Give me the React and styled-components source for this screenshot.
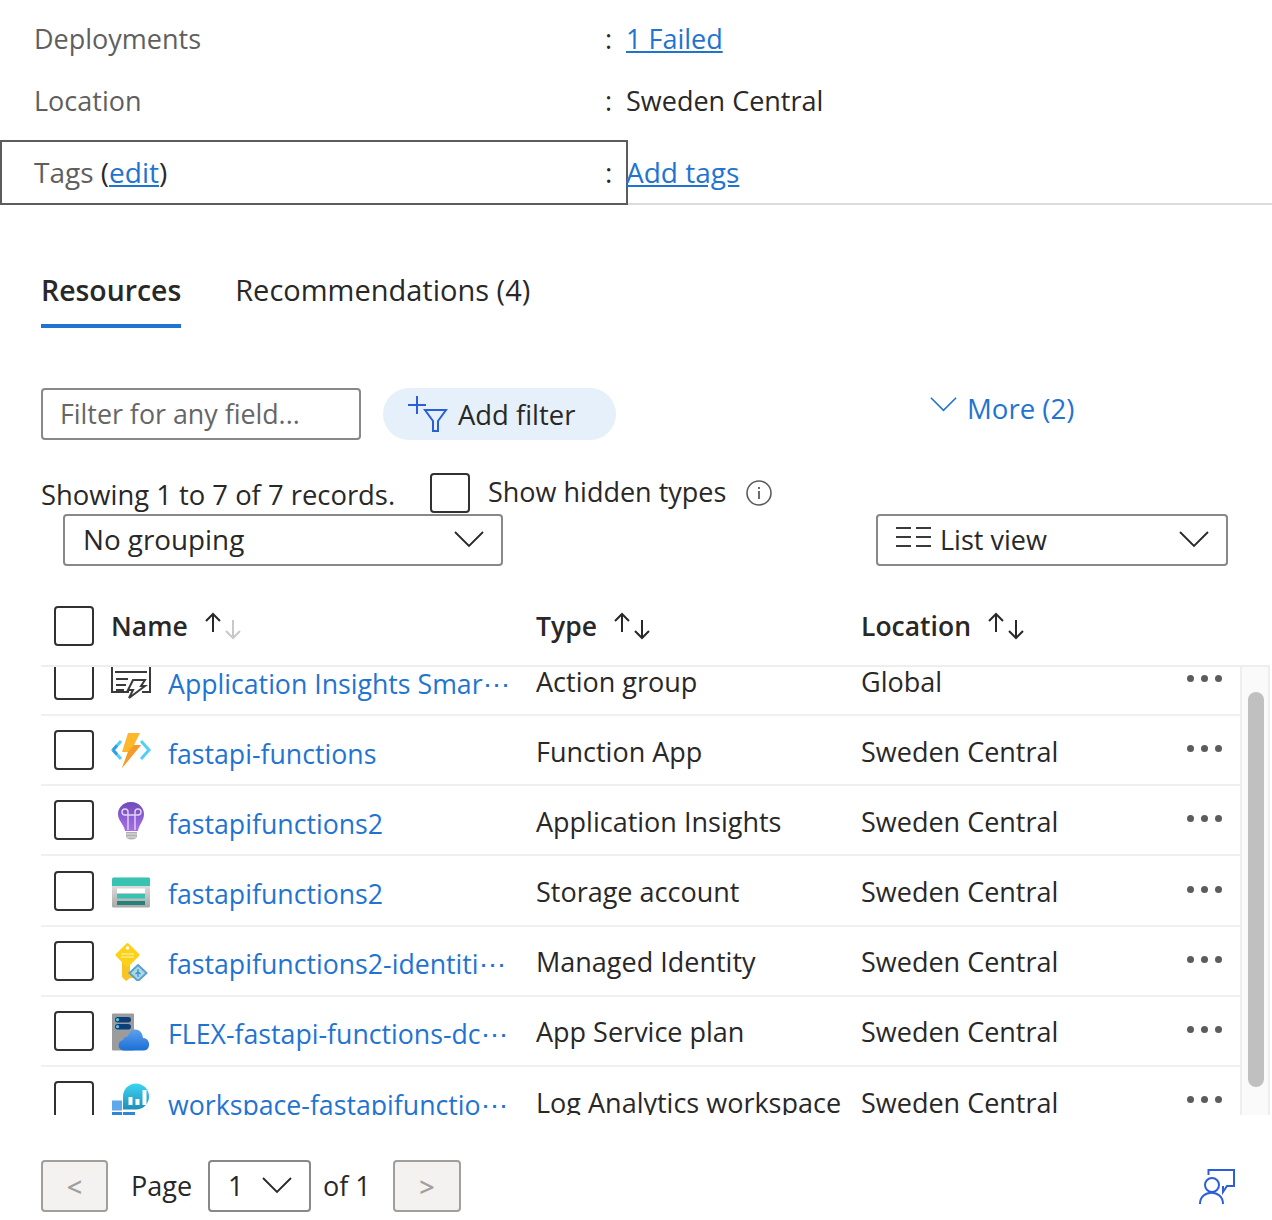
import React from "react";
import styled, { createGlobalStyle } from "styled-components";

const GlobalStyle = createGlobalStyle`
  html, body {
    margin: 0;
    padding: 0;
    background: #ffffff;
  }
  body {
    font-family: "Open Sans", "Liberation Sans", sans-serif;
    color: #292827;
  }
  * {
    box-sizing: border-box;
  }
`;

const BLUE = "#1f74d2";

const Page = styled.div`
  width: 1272px;
  height: 1220px;
  overflow: hidden;
  font-size: 27px;
`;

const Summary = styled.div`
  padding-top: 7px;
  border-bottom: 2px solid #dcdcdc;
`;

const SummaryRow = styled.div`
  display: flex;
  align-items: center;
  height: 62px;
  padding-left: 34px;
`;

const Label = styled.div`
  width: 571px;
  color: #5f5f5f;
`;

const Colon = styled.div`
  width: 21px;
`;

const Link = styled.a`
  color: ${BLUE};
  text-decoration: underline;
`;

const Paren = styled.span`
  color: #292827;
`;

const TagsRow = styled.div`
  display: flex;
  align-items: center;
  margin-top: 9px;
  height: 65px;
  margin-bottom: -2px;
  padding-bottom: 0;
  font-size: 28px;
  line-height: 36px;
`;

const TagsCell = styled.div`
  display: flex;
  align-items: center;
  width: 628px;
  height: 65px;
  padding: 0 0 2px 32px;
  border: 2px solid #5c5c5c;
  margin-right: -2px;
`;

const TagsValue = styled.div`
  padding-bottom: 2px;
`;

const Tabs = styled.div`
  display: flex;
  gap: 54px;
  margin-top: 68px;
  padding-left: 41px;
`;

const Tab = styled.div`
  height: 55px;
  border-bottom: ${(p) => (p.$active ? `4px solid ${BLUE}` : "none")};
  font-size: ${(p) => (p.$active ? 28.4 : 29)}px;
  font-weight: ${(p) => (p.$active ? 600 : 400)};
  line-height: 34px;
`;

const FilterRow = styled.div`
  display: flex;
  margin-top: 60px;
  padding-left: 41px;
  height: 52px;
`;

const FilterInput = styled.input`
  width: 320px;
  height: 52px;
  padding: 0 17px 2px;
  border: 2px solid #8a8886;
  border-radius: 4px;
  font: inherit;
  font-size: 26.8px;
  color: #292827;
  &::placeholder {
    color: #666666;
    opacity: 1;
  }
`;

const AddFilter = styled.div`
  display: flex;
  align-items: center;
  gap: 10px;
  width: 233px;
  height: 52px;
  margin-left: 22px;
  padding-left: 24px;
  border-radius: 26px;
  background: #e6f0fa;
  font-size: 27.4px;
`;

const More = styled.div`
  display: flex;
  align-items: center;
  gap: 10px;
  height: 40px;
  margin-left: 314px;
  color: ${BLUE};
  font-size: 27.6px;
`;

const MoreChevron = styled.div`
  display: flex;
  margin-bottom: 7px;
`;

const RecordsRow = styled.div`
  display: flex;
  height: 41px;
  margin-top: 33px;
  padding-left: 41px;
`;

const Records = styled.div`
  width: 389px;
  padding-top: 4px;
  line-height: 36px;
  font-size: 27.4px;
`;

const Checkbox = styled.div`
  flex: none;
  width: 40px;
  height: 40px;
  border: 2px solid #323130;
  border-radius: 4px;
  background: #ffffff;
`;

const ShowHidden = styled.div`
  margin-left: 18px;
  line-height: 38px;
`;

const InfoIcon = styled.svg`
  margin: 7px 0 0 20px;
`;

const GroupRow = styled.div`
  display: flex;
  justify-content: space-between;
  padding: 0 44px 0 63px;
`;

const Select = styled.div`
  display: flex;
  align-items: center;
  justify-content: space-between;
  width: ${(p) => p.$width}px;
  height: 52px;
  padding: 0 ${(p) => p.$right}px 2px ${(p) => p.$left}px;
  border: 2px solid #8a8886;
  border-radius: 4px;
  font-size: ${(p) => p.$size || 27}px;
`;

const SelectLabel = styled.div`
  display: flex;
  align-items: center;
  gap: 8px;
`;

const ListIcon = styled.svg`
  margin-bottom: 4px;
`;

const TableHead = styled.div`
  display: grid;
  grid-template-columns: 57px 425px 325px 1fr;
  height: 61px;
  margin: 40px 2px 0 41px;
  padding-left: 13px;
  border-bottom: 2px solid #eeeeee;
`;

const HeadCell = styled.div`
  display: flex;
  gap: 17px;
  height: 40px;
  align-items: center;
  font-size: 26.5px;
  font-weight: 600;
`;

const TableBody = styled.div`
  display: flex;
  height: 448px;
  margin: 0 2px 0 41px;
  overflow: hidden;
`;

const Rows = styled.div`
  width: 1199px;
  height: 448px;
  overflow: hidden;
`;

const RowsInner = styled.div`
  margin-top: -21px;
`;

const Row = styled.div`
  display: grid;
  grid-template-columns: 57px 57px 368px 325px 326px 1fr;
  align-items: center;
  height: 70.17px;
  padding-left: 13px;
  border-bottom: 2px solid #f0f0f0;
`;

const IconCell = styled.div`
  display: flex;
`;

const NameLink = styled.div`
  color: ${BLUE};
  white-space: nowrap;
  padding-top: 6px;
  font-size: 26.7px;
`;

const CellText = styled.div`
  white-space: nowrap;
  padding-top: 2px;
`;

const Dots = styled.div`
  display: flex;
  gap: 7px;
  margin-bottom: 3px;
`;

const Dot = styled.span`
  width: 7px;
  height: 7px;
  border-radius: 50%;
  background: #5c5c5c;
`;

const Track = styled.div`
  width: 30px;
  height: 448px;
  padding: 25px 0 0 6px;
  border-left: 2px solid #eeeeee;
  border-right: 2px solid #eeeeee;
  background: #fafafa;
`;

const Thumb = styled.div`
  width: 16px;
  height: 395px;
  border-radius: 8px;
  background: #c0c0c0;
`;

const Pager = styled.div`
  display: flex;
  align-items: center;
  height: 52px;
  margin-top: 45px;
  padding: 0 37px 0 41px;
`;

const PageButton = styled.div`
  display: flex;
  align-items: center;
  justify-content: center;
  width: ${(p) => p.$width}px;
  height: 52px;
  border: 2px solid #a19f9d;
  border-radius: 4px;
  background: #f3f2f1;
  color: #a19f9d;
  font-weight: 600;
`;

const PagerText = styled.div`
  width: ${(p) => p.$width}px;
  margin-left: ${(p) => p.$left}px;
  padding-bottom: 2px;
`;

const Feedback = styled.svg`
  margin-left: auto;
`;

const Chevron = ({ size = 30, color = "#292827" }) => (
  <svg width={size} height={size * 0.6} viewBox="0 0 30 18" fill="none">
    <path d="M1 2 L15 16 L29 2" stroke={color} strokeWidth="1.8" />
  </svg>
);

const SortArrows = ({ down = "#292827" }) => (
  <svg width="36" height="28" viewBox="0 0 36 28" fill="none">
    <path d="M8 20 V2 M1 9 L8 2 L15 9" stroke="#292827" strokeWidth="2" />
    <path d="M28 8 V26 M21 19 L28 26 L35 19" stroke={down} strokeWidth="2" />
  </svg>
);

const ActionGroupIcon = () => (
  <svg width="40" height="40" viewBox="0 0 40 40" fill="none">
    <path d="M18 32 H1 V3 H39 V32 H31" stroke="#3a3a3a" strokeWidth="2" />
    <path d="M4 12 H36 M5 19 H17 M5 25 H15 M5 30 H13" stroke="#3a3a3a" strokeWidth="2" />
    <path d="M22 20 H34 L30 26 H34 L18 38 L22 30 H17 Z" fill="#ffffff" stroke="#3a3a3a" strokeWidth="2" />
  </svg>
);

const FunctionIcon = () => (
  <svg width="40" height="40" viewBox="0 0 40 40" fill="none">
    <path d="M10 11 L2 20 L10 29" stroke="#4fd0f8" strokeWidth="3" />
    <path d="M30 11 L38 20 L30 29" stroke="#4fd0f8" strokeWidth="3" />
    <path d="M2 20 L6 15.5 M2 20 L6 24.5" stroke="#3a9ce0" strokeWidth="3" />
    <path d="M17 3 H29 L23 15 H30 L11 38 L17 22 H11 Z" fill="#fcb72b" />
    <path d="M23 15 H30 L11 38 L17 22 Z" fill="#f79a2a" />
  </svg>
);

const BulbIcon = () => (
  <svg width="40" height="40" viewBox="0 0 40 40" fill="none">
    <defs>
      <linearGradient id="bulb" x1="0" y1="0" x2="0" y2="1">
        <stop offset="0" stopColor="#6f4bb8" />
        <stop offset="1" stopColor="#a670e8" />
      </linearGradient>
    </defs>
    <path d="M20 2 C11 2 7 9 7 14 C7 21 13 24 14 31 H27 C28 24 33 21 33 14 C33 9 29 2 20 2 Z" fill="url(#bulb)" />
    <path d="M17 30 V12 M24 30 V12 M17 12 a3 3 0 1 0 -3 3 H27 a3 3 0 1 0 -3 -3" stroke="#e4d4f8" strokeWidth="1.4" />
    <path d="M15 32 H26 V36 C26 38 24 39.5 20.5 39.5 C17 39.5 15 38 15 36 Z" fill="#b0b0b0" />
    <path d="M15 34 H26 M16 37 H25" stroke="#e4e4e4" strokeWidth="1" />
  </svg>
);

const StorageIcon = () => (
  <svg width="40" height="40" viewBox="0 0 40 40" fill="none">
    <defs>
      <linearGradient id="store" x1="0" y1="0" x2="0" y2="1">
        <stop offset="0" stopColor="#f0f0f0" />
        <stop offset="1" stopColor="#a8a8a8" />
      </linearGradient>
    </defs>
    <rect x="1" y="6.5" width="38" height="30" rx="1.5" fill="url(#store)" />
    <path d="M1 8 a1.5 1.5 0 0 1 1.5 -1.5 H37.5 a1.5 1.5 0 0 1 1.5 1.5 V15 H1 Z" fill="#37c2b1" />
    <rect x="6" y="17.5" width="28" height="4.5" fill="#ffffff" />
    <rect x="6" y="23" width="28" height="4.5" fill="#37c2b1" />
    <rect x="6" y="30" width="28" height="4" fill="#258277" />
  </svg>
);

const KeyIcon = () => (
  <svg width="40" height="40" viewBox="0 0 40 40" fill="none">
    <path d="M11 20 H19 V33 H22 V37 H19 L15 40 L11 36 Z" fill="#f7c325" />
    <path d="M16.5 3.5 L27 14 L16.5 24.5 L6 14 Z" fill="#fcd116" stroke="#fcd116" strokeWidth="3" strokeLinejoin="round" />
    <circle cx="16.5" cy="7" r="1.8" fill="#ffffff" />
    <path d="M10 13 H23 M10 16 H23" stroke="#ffe98a" strokeWidth="1.4" />
    <path d="M27 24 L35.5 32 L27 40 L18.5 32 Z" fill="#a8d8ea" stroke="#5ea0c8" strokeWidth="2" />
    <path d="M27 28 V36 M24.5 33 L27 31 L29.5 33" stroke="#3c8dbc" strokeWidth="1.2" />
  </svg>
);

const PlanIcon = () => (
  <svg width="40" height="40" viewBox="0 0 40 40" fill="none">
    <defs>
      <linearGradient id="cloud" x1="0" y1="0" x2="0" y2="1">
        <stop offset="0" stopColor="#5ea0ef" />
        <stop offset="1" stopColor="#1b6fd6" />
      </linearGradient>
    </defs>
    <rect x="1" y="2.5" width="22" height="37" rx="1" fill="#9c9c9c" />
    <rect x="4" y="6" width="16" height="5.5" rx="2.7" fill="#0a3f7a" />
    <rect x="4" y="13" width="16" height="5.5" rx="2.7" fill="#0a3f7a" />
    <circle cx="6.5" cy="8.7" r="1.6" fill="#50c7f0" />
    <circle cx="6.5" cy="15.7" r="1.6" fill="#50c7f0" />
    <path d="M13 39.5 C6 39.5 6 30 12 29 C13 26 15 25 17 25.5 C19 16 31 16 32 27 C40 27 40 39.5 33 39.5 Z" fill="url(#cloud)" />
  </svg>
);

const WorkspaceIcon = () => (
  <svg width="40" height="40" viewBox="0 0 40 40" fill="none">
    <defs>
      <linearGradient id="ws" x1="0" y1="0" x2="0" y2="1">
        <stop offset="0" stopColor="#3cd4f2" />
        <stop offset="1" stopColor="#1f8fb8" />
      </linearGradient>
    </defs>
    <rect x="1" y="19.5" width="10" height="10" fill="#5ea9ec" />
    <rect x="1" y="31" width="10" height="9" fill="#2f86d8" />
    <rect x="12" y="31" width="12" height="9" fill="#2f86d8" />
    <path d="M12 28.5 V15.5 A13 13 0 1 1 25 28.5 Z" fill="url(#ws)" />
    <rect x="17.5" y="16" width="4" height="8" fill="#ffffff" />
    <rect x="24.5" y="18" width="4" height="6" fill="#ffffff" />
    <rect x="31.5" y="9" width="4" height="15" fill="#ffffff" />
  </svg>
);

const resources = [
  { name: "Application Insights Smar⋯", type: "Action group", location: "Global", icon: <ActionGroupIcon /> },
  { name: "fastapi-functions", type: "Function App", location: "Sweden Central", icon: <FunctionIcon /> },
  { name: "fastapifunctions2", type: "Application Insights", location: "Sweden Central", icon: <BulbIcon /> },
  { name: "fastapifunctions2", type: "Storage account", location: "Sweden Central", icon: <StorageIcon /> },
  { name: "fastapifunctions2-identiti⋯", type: "Managed Identity", location: "Sweden Central", icon: <KeyIcon /> },
  { name: "FLEX-fastapi-functions-dc⋯", type: "App Service plan", location: "Sweden Central", icon: <PlanIcon /> },
  { name: "workspace-fastapifunctio⋯", type: "Log Analytics workspace", location: "Sweden Central", icon: <WorkspaceIcon /> },
];

export default function App() {
  return (
    <Page>
      <GlobalStyle />
      <Summary>
        <SummaryRow>
          <Label>Deployments</Label>
          <Colon>:</Colon>
          <Link>1 Failed</Link>
        </SummaryRow>
        <SummaryRow>
          <Label>Location</Label>
          <Colon>:</Colon>
          <div>Sweden Central</div>
        </SummaryRow>
        <TagsRow>
          <TagsCell>
            <Label>
              Tags <Paren>(</Paren>
              <Link>edit</Link>
              <Paren>)</Paren>
            </Label>
            <Colon>:</Colon>
          </TagsCell>
          <TagsValue>
            <Link>Add tags</Link>
          </TagsValue>
        </TagsRow>
      </Summary>

      <Tabs>
        <Tab $active>Resources</Tab>
        <Tab>Recommendations (4)</Tab>
      </Tabs>

      <FilterRow>
        <FilterInput placeholder="Filter for any field..." />
        <AddFilter>
          <svg width="41" height="38" viewBox="0 0 41 38" fill="none">
            <path d="M10 1 V19 M1 10 H19" stroke="#2a5fd8" strokeWidth="2" />
            <path d="M18 15 H39 L31 26 V36 H26 V26 Z" stroke="#2a5fd8" strokeWidth="2" />
          </svg>
          <div>Add filter</div>
        </AddFilter>
        <More>
          <MoreChevron>
            <Chevron size={27} color={BLUE} />
          </MoreChevron>
          <div>More (2)</div>
        </More>
      </FilterRow>

      <RecordsRow>
        <Records>Showing 1 to 7 of 7 records.</Records>
        <Checkbox />
        <ShowHidden>Show hidden types</ShowHidden>
        <InfoIcon width="26" height="26" viewBox="0 0 26 26" fill="none">
          <circle cx="13" cy="13" r="12" stroke="#5c5c5c" strokeWidth="1.6" />
          <path d="M13 11 V19 M13 7 V9" stroke="#5c5c5c" strokeWidth="1.8" />
        </InfoIcon>
      </RecordsRow>

      <GroupRow>
        <Select $width={440} $left={18} $right={17} $size={27.8}>
          <div>No grouping</div>
          <Chevron />
        </Select>
        <Select $width={352} $left={18} $right={17}>
          <SelectLabel>
            <ListIcon width="36" height="20" viewBox="0 0 36 20" fill="none">
              <path d="M0 1 H15 M0 10 H15 M0 19 H15 M20 1 H35 M20 10 H35 M20 19 H35" stroke="#3a3a3a" strokeWidth="2" />
            </ListIcon>
            <div>List view</div>
          </SelectLabel>
          <Chevron />
        </Select>
      </GroupRow>

      <TableHead>
        <Checkbox />
        <HeadCell>
          Name
          <SortArrows down="#c8c8c8" />
        </HeadCell>
        <HeadCell>
          Type
          <SortArrows />
        </HeadCell>
        <HeadCell>
          Location
          <SortArrows />
        </HeadCell>
      </TableHead>

      <TableBody>
        <Rows>
          <RowsInner>
            {resources.map((r) => (
              <Row key={r.name + r.type}>
                <Checkbox />
                <IconCell>{r.icon}</IconCell>
                <NameLink>{r.name}</NameLink>
                <CellText>{r.type}</CellText>
                <CellText>{r.location}</CellText>
                <Dots>
                  <Dot />
                  <Dot />
                  <Dot />
                </Dots>
              </Row>
            ))}
          </RowsInner>
        </Rows>
        <Track>
          <Thumb />
        </Track>
      </TableBody>

      <Pager>
        <PageButton $width={67}>&lt;</PageButton>
        <PagerText $left={23} $width={77}>Page</PagerText>
        <Select $width={103} $left={18} $right={17}>
          <div>1</div>
          <Chevron />
        </Select>
        <PagerText $left={12} $width={70}>of 1</PagerText>
        <PageButton $width={68}>&gt;</PageButton>
        <Feedback width="36" height="36" viewBox="0 0 36 36" fill="none">
          <path d="M9.5 7 V2 H35 V18 H28 L24 24 V18" stroke="#2a5fd8" strokeWidth="2" />
          <circle cx="13" cy="17" r="7" stroke="#2a5fd8" strokeWidth="2" />
          <path d="M1 36 C1 21 24 21 24 36" stroke="#2a5fd8" strokeWidth="2" />
        </Feedback>
      </Pager>
    </Page>
  );
}
